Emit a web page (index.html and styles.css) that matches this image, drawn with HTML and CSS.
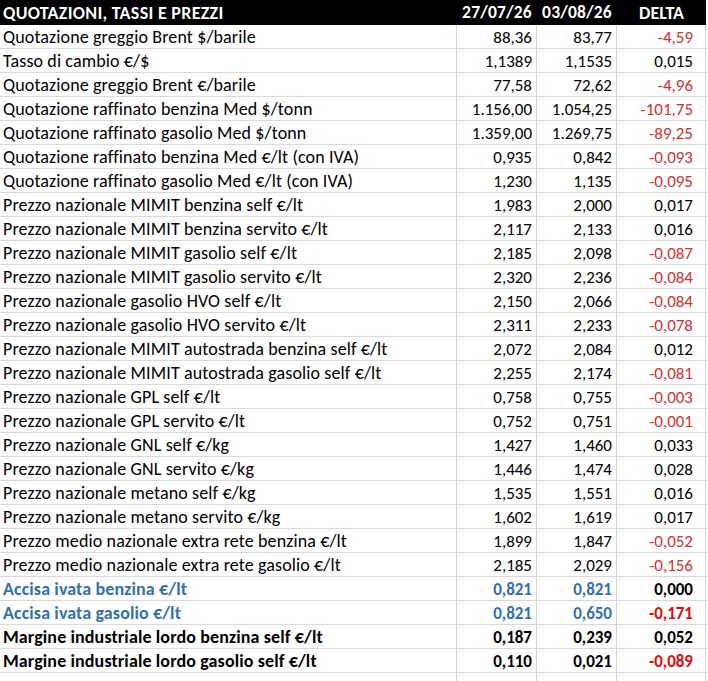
FILE: index.html
```html
<!DOCTYPE html>
<html lang="it">
<head>
<meta charset="utf-8">
<title>Quotazioni, tassi e prezzi</title>
<link rel="stylesheet" href="styles.css">
</head>
<body>
<div class="sheet">
  <div class="row head">
    <div class="c lab">QUOTAZIONI, TASSI E PREZZI</div>
    <div class="c n">27/07/26</div>
    <div class="c n">03/08/26</div>
    <div class="c d">DELTA</div>
    <div class="c x"></div>
  </div>
  <div class="row"><div class="c lab">Quotazione greggio Brent $/barile</div><div class="c n">88,36</div><div class="c n">83,77</div><div class="c d neg">-4,59</div><div class="c x"></div></div>
  <div class="row"><div class="c lab">Tasso di cambio €/$</div><div class="c n">1,1389</div><div class="c n">1,1535</div><div class="c d">0,015</div><div class="c x"></div></div>
  <div class="row"><div class="c lab">Quotazione greggio Brent €/barile</div><div class="c n">77,58</div><div class="c n">72,62</div><div class="c d neg">-4,96</div><div class="c x"></div></div>
  <div class="row"><div class="c lab">Quotazione raffinato benzina Med $/tonn</div><div class="c n">1.156,00</div><div class="c n">1.054,25</div><div class="c d neg">-101,75</div><div class="c x"></div></div>
  <div class="row"><div class="c lab">Quotazione raffinato gasolio Med $/tonn</div><div class="c n">1.359,00</div><div class="c n">1.269,75</div><div class="c d neg">-89,25</div><div class="c x"></div></div>
  <div class="row"><div class="c lab">Quotazione raffinato benzina Med €/lt (con IVA)</div><div class="c n">0,935</div><div class="c n">0,842</div><div class="c d neg">-0,093</div><div class="c x"></div></div>
  <div class="row"><div class="c lab">Quotazione raffinato gasolio Med €/lt (con IVA)</div><div class="c n">1,230</div><div class="c n">1,135</div><div class="c d neg">-0,095</div><div class="c x"></div></div>
  <div class="row"><div class="c lab">Prezzo nazionale MIMIT benzina self €/lt</div><div class="c n">1,983</div><div class="c n">2,000</div><div class="c d">0,017</div><div class="c x"></div></div>
  <div class="row"><div class="c lab">Prezzo nazionale MIMIT benzina servito €/lt</div><div class="c n">2,117</div><div class="c n">2,133</div><div class="c d">0,016</div><div class="c x"></div></div>
  <div class="row"><div class="c lab">Prezzo nazionale MIMIT gasolio self €/lt</div><div class="c n">2,185</div><div class="c n">2,098</div><div class="c d neg">-0,087</div><div class="c x"></div></div>
  <div class="row"><div class="c lab">Prezzo nazionale MIMIT gasolio servito €/lt</div><div class="c n">2,320</div><div class="c n">2,236</div><div class="c d neg">-0,084</div><div class="c x"></div></div>
  <div class="row"><div class="c lab">Prezzo nazionale gasolio HVO self €/lt</div><div class="c n">2,150</div><div class="c n">2,066</div><div class="c d neg">-0,084</div><div class="c x"></div></div>
  <div class="row"><div class="c lab">Prezzo nazionale gasolio HVO servito €/lt</div><div class="c n">2,311</div><div class="c n">2,233</div><div class="c d neg">-0,078</div><div class="c x"></div></div>
  <div class="row"><div class="c lab">Prezzo nazionale MIMIT autostrada benzina self €/lt</div><div class="c n">2,072</div><div class="c n">2,084</div><div class="c d">0,012</div><div class="c x"></div></div>
  <div class="row"><div class="c lab">Prezzo nazionale MIMIT autostrada gasolio self €/lt</div><div class="c n">2,255</div><div class="c n">2,174</div><div class="c d neg">-0,081</div><div class="c x"></div></div>
  <div class="row"><div class="c lab">Prezzo nazionale GPL self €/lt</div><div class="c n">0,758</div><div class="c n">0,755</div><div class="c d neg">-0,003</div><div class="c x"></div></div>
  <div class="row"><div class="c lab">Prezzo nazionale GPL servito €/lt</div><div class="c n">0,752</div><div class="c n">0,751</div><div class="c d neg">-0,001</div><div class="c x"></div></div>
  <div class="row"><div class="c lab">Prezzo nazionale GNL self €/kg</div><div class="c n">1,427</div><div class="c n">1,460</div><div class="c d">0,033</div><div class="c x"></div></div>
  <div class="row"><div class="c lab">Prezzo nazionale GNL servito €/kg</div><div class="c n">1,446</div><div class="c n">1,474</div><div class="c d">0,028</div><div class="c x"></div></div>
  <div class="row"><div class="c lab">Prezzo nazionale metano self €/kg</div><div class="c n">1,535</div><div class="c n">1,551</div><div class="c d">0,016</div><div class="c x"></div></div>
  <div class="row"><div class="c lab">Prezzo nazionale metano servito €/kg</div><div class="c n">1,602</div><div class="c n">1,619</div><div class="c d">0,017</div><div class="c x"></div></div>
  <div class="row"><div class="c lab">Prezzo medio nazionale extra rete benzina €/lt</div><div class="c n">1,899</div><div class="c n">1,847</div><div class="c d neg">-0,052</div><div class="c x"></div></div>
  <div class="row"><div class="c lab">Prezzo medio nazionale extra rete gasolio €/lt</div><div class="c n">2,185</div><div class="c n">2,029</div><div class="c d neg">-0,156</div><div class="c x"></div></div>
  <div class="row bold blue"><div class="c lab">Accisa ivata benzina €/lt</div><div class="c n">0,821</div><div class="c n">0,821</div><div class="c d">0,000</div><div class="c x"></div></div>
  <div class="row bold blue"><div class="c lab">Accisa ivata gasolio €/lt</div><div class="c n">0,821</div><div class="c n">0,650</div><div class="c d neg">-0,171</div><div class="c x"></div></div>
  <div class="row bold"><div class="c lab">Margine industriale lordo benzina self €/lt</div><div class="c n">0,187</div><div class="c n">0,239</div><div class="c d">0,052</div><div class="c x"></div></div>
  <div class="row bold"><div class="c lab">Margine industriale lordo gasolio self €/lt</div><div class="c n">0,110</div><div class="c n">0,021</div><div class="c d neg">-0,089</div><div class="c x"></div></div>
  <div class="row empty"><div class="c lab"></div><div class="c n"></div><div class="c n"></div><div class="c d"></div><div class="c x"></div></div>
</div>
</body>
</html>
```

FILE: styles.css
```css
html, body {
  margin: 0;
  padding: 0;
  background: #ffffff;
}

body {
  width: 708px;
  height: 681px;
  overflow: hidden;
  font-family: "Carlito", "Lato", "Liberation Sans", sans-serif;
  font-size: 17px;
  color: #000000;
}

.sheet {
  display: flex;
  flex-direction: column;
  width: 712px;
}

.row {
  display: grid;
  grid-template-columns: 457px 80px 80px 89px 6px;
  height: 24px;
  box-sizing: border-box;
  border-bottom: 1px solid #d9d9d9;
}

.c {
  box-sizing: border-box;
  border-right: 1px solid #d4d4d4;
  display: flex;
  align-items: center;
  white-space: nowrap;
  overflow: hidden;
  line-height: 1;
  padding-top: 1px;
}

.lab {
  padding-left: 3px;
  font-size: 18px;
  letter-spacing: 0.12px;
}

.n {
  justify-content: flex-end;
  padding-right: 4px;
}

.d {
  justify-content: flex-end;
  padding-right: 12px;
}

.x {
  border-right: none;
}

.head {
  height: 25px;
  background: #000000;
  color: #ffffff;
  font-weight: 700;
  border-bottom: none;
}

.head .c {
  border-right: none;
  justify-content: center;
  padding-right: 0;
}

.head .lab {
  justify-content: flex-start;
  font-size: 18px;
  letter-spacing: 0.3px;
}

.head .n {
  font-size: 17.5px;
  letter-spacing: 0.2px;
}

.head .d {
  font-size: 18px;
}

.head .x {
  background: #ffffff;
}

.neg {
  color: #d42f2f;
}

.bold {
  font-weight: 700;
}

.bold .neg {
  color: #e30b0b;
}

.blue .lab,
.blue .n {
  color: #3470a8;
}

.empty {
  border-bottom: none;
}
```
